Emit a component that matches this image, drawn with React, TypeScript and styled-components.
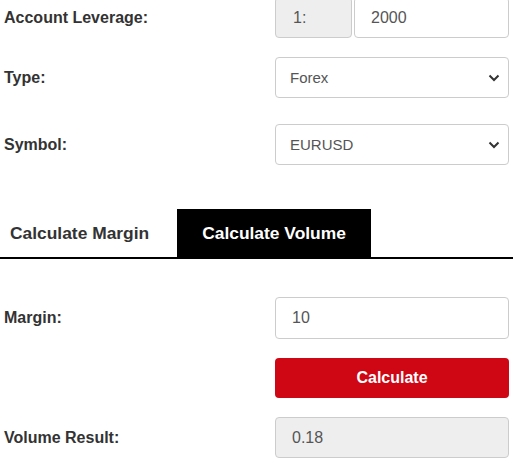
import React, { useState } from "react";
import styled, { createGlobalStyle } from "styled-components";

const GlobalStyle = createGlobalStyle`
  body {
    margin: 0;
    background: #fff;
    font-family: "Liberation Sans", Arial, sans-serif;
    color: #333;
  }
  * { box-sizing: border-box; }
`;

const Wrapper = styled.div`
  width: 515px;
  margin-top: -3px;
`;

const Row = styled.div<{ $gap?: number }>`
  display: grid;
  grid-template-columns: 271px 234px;
  align-items: center;
  padding-left: 4px;
  margin-bottom: ${(p) => p.$gap ?? 19}px;
`;

const Label = styled.label`
  font-size: 16px;
  font-weight: bold;
  color: #333;
`;

const Field = styled.input<{ $readonly?: boolean }>`
  width: 100%;
  height: 41px;
  padding: 0 16px;
  border: 1px solid #ccc;
  border-radius: 4px;
  font-family: inherit;
  font-size: 16px;
  color: #555;
  background: ${(p) => (p.$readonly ? "#eee" : "#fff")};
  outline: none;
`;

const Group = styled.div`
  display: flex;
  gap: 2px;
`;

const Addon = styled.span`
  width: 77px;
  height: 41px;
  display: flex;
  align-items: center;
  padding-left: 17px;
  background: #eee;
  border: 1px solid #ccc;
  border-radius: 4px;
  font-size: 16px;
  color: #555;
  flex-shrink: 0;
`;

const SelectBox = styled.div`
  position: relative;
  svg {
    position: absolute;
    right: 9px;
    top: 50%;
    margin-top: -4px;
    pointer-events: none;
  }
`;

const Select = styled.select`
  width: 100%;
  height: 41px;
  padding: 0 14px;
  border: 1px solid #ccc;
  border-radius: 4px;
  font-family: inherit;
  font-size: 15px;
  color: #555;
  background: #fff;
  appearance: none;
  outline: none;
`;

const Tabs = styled.div`
  display: flex;
  width: 513px;
  border-bottom: 2px solid #000;
  margin-top: 44px;
  margin-bottom: 38px;
`;

const Tab = styled.button<{ $active?: boolean; $first?: boolean }>`
  height: 48px;
  padding: ${(p) => (p.$first ? "0 28px 0 10px" : "0 25px")};
  border: none;
  font-family: inherit;
  font-size: 17.4px;
  font-weight: bold;
  cursor: pointer;
  background: ${(p) => (p.$active ? "#000" : "#fff")};
  color: ${(p) => (p.$active ? "#fff" : "#333")};
`;

const Button = styled.button`
  grid-column: 2;
  height: 40px;
  border: none;
  border-radius: 4px;
  background: #cf0613;
  color: #fff;
  font-family: inherit;
  font-size: 16px;
  font-weight: bold;
  cursor: pointer;
`;

const Chevron = () => (
  <svg width="12" height="8" viewBox="0 0 12 8">
    <path d="M1.5 1.5 L6 6 L10.5 1.5" fill="none" stroke="#333" strokeWidth="2" />
  </svg>
);

export default function App() {
  const [tab, setTab] = useState(1);
  const [margin, setMargin] = useState("10");
  return (
    <Wrapper>
      <GlobalStyle />
      <Row>
        <Label>Account Leverage:</Label>
        <Group>
          <Addon>1:</Addon>
          <Field defaultValue="2000" />
        </Group>
      </Row>
      <Row $gap={26}>
        <Label>Type:</Label>
        <SelectBox>
          <Select defaultValue="Forex">
            <option>Forex</option>
            <option>Indices</option>
            <option>Metals</option>
          </Select>
          <Chevron />
        </SelectBox>
      </Row>
      <Row $gap={0}>
        <Label>Symbol:</Label>
        <SelectBox>
          <Select defaultValue="EURUSD">
            <option>EURUSD</option>
            <option>GBPUSD</option>
            <option>USDJPY</option>
          </Select>
          <Chevron />
        </SelectBox>
      </Row>
      <Tabs>
        <Tab $first $active={tab === 0} onClick={() => setTab(0)}>
          Calculate Margin
        </Tab>
        <Tab $active={tab === 1} onClick={() => setTab(1)}>
          Calculate Volume
        </Tab>
      </Tabs>
      <Row>
        <Label>Margin:</Label>
        <Field value={margin} onChange={(e) => setMargin(e.target.value)} style={{ height: 42 }} />
      </Row>
      <Row>
        <Button>Calculate</Button>
      </Row>
      <Row $gap={0}>
        <Label>Volume Result:</Label>
        <Field $readonly readOnly value="0.18" />
      </Row>
    </Wrapper>
  );
}
